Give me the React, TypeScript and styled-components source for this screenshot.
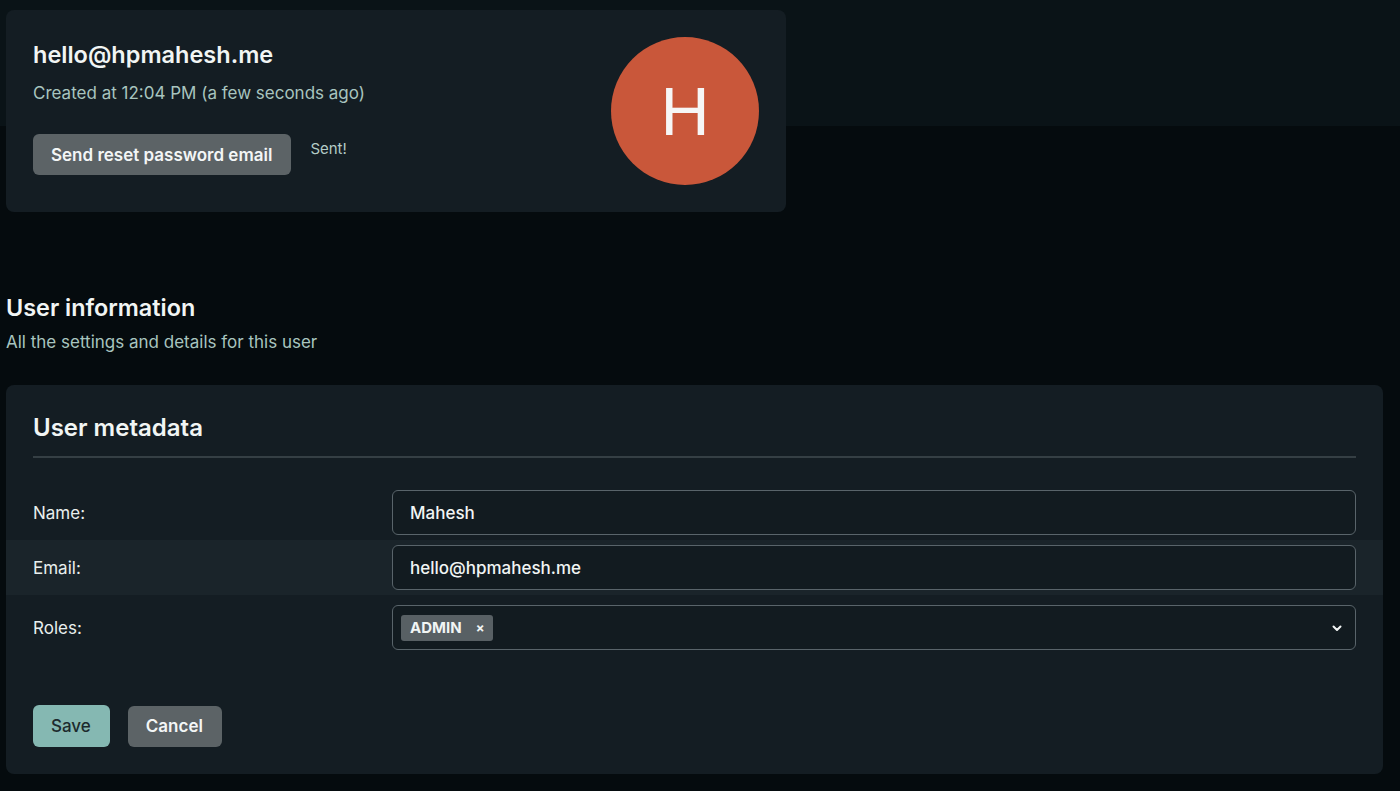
import styled, { createGlobalStyle } from "styled-components";

const GlobalStyle = createGlobalStyle`
  html, body {
    margin: 0;
    padding: 0;
  }
  body {
    background: linear-gradient(#0a1317 0, #0a1317 126px, #050b0e 126px, #050b0e 100%);
    min-height: 100vh;
    font-family: Inter, "Noto Sans", "Liberation Sans", sans-serif;
    color: #eef3f2;
  }
`;

export default function App() {
  return (
    <>
      <GlobalStyle />
      <Page>
        <ProfileCard>
          <ProfileInfo>
            <Email>hello@hpmahesh.me</Email>
            <Created>Created at 12:04 PM (a few seconds ago)</Created>
            <ActionRow>
              <Button $variant="muted">Send reset password email</Button>
              <Sent>Sent!</Sent>
            </ActionRow>
          </ProfileInfo>
          <Avatar>H</Avatar>
        </ProfileCard>

        <Heading>User information</Heading>
        <SubHeading>All the settings and details for this user</SubHeading>

        <FormCard>
          <CardTitle>User metadata</CardTitle>
          <Rows>
            <Row>
              <Label>Name:</Label>
              <Input defaultValue="Mahesh" />
            </Row>
            <Row $striped>
              <Label>Email:</Label>
              <Input defaultValue="hello@hpmahesh.me" />
            </Row>
            <Row $spaced>
              <Label>Roles:</Label>
              <Select>
                <Tag>
                  ADMIN <TagClose>×</TagClose>
                </Tag>
                <svg width="12" height="12" viewBox="0 0 12 12">
                  <path
                    d="M2.5 4.5 L6 8 L9.5 4.5"
                    fill="none"
                    stroke="#f2f5f5"
                    strokeWidth="2"
                    strokeLinecap="round"
                    strokeLinejoin="round"
                  />
                </svg>
              </Select>
            </Row>
          </Rows>
          <Buttons>
            <Button $variant="primary">Save</Button>
            <Button $variant="muted">Cancel</Button>
          </Buttons>
        </FormCard>
      </Page>
    </>
  );
}

const Page = styled.div`
  padding: 10px 17px 20px 6px;
`;

const ProfileCard = styled.div`
  width: 780px;
  box-sizing: border-box;
  background: #141d23;
  border-radius: 8px;
  padding: 27px;
  display: flex;
  align-items: center;
  justify-content: space-between;
`;

const ProfileInfo = styled.div`
  display: flex;
  flex-direction: column;
  margin-top: -6px;
`;

const Email = styled.div`
  font-size: 23.5px;
  font-weight: 600;
  line-height: 28px;
  color: #f1f5f4;
`;

const Created = styled.div`
  margin-top: 12px;
  font-size: 17px;
  line-height: 24px;
  color: #a8c4bf;
`;

const ActionRow = styled.div`
  display: flex;
  align-items: flex-start;
  gap: 19px;
  margin-top: 29px;
`;

const Sent = styled.span`
  font-size: 15px;
  line-height: 20px;
  padding-top: 5px;
  color: #b3cbc6;
`;

const Button = styled.button<{ $variant: "primary" | "muted" }>`
  font-family: Inter, "Noto Sans", "Liberation Sans", sans-serif;
  font-size: 17px;
  font-weight: ${(p) => (p.$variant === "primary" ? 500 : 600)};
  height: ${(p) => (p.$variant === "primary" ? "42px" : "41px")};
  padding: 0 19px 0 18px;
  border: none;
  border-radius: 6px;
  cursor: pointer;
  background: ${(p) => (p.$variant === "primary" ? "#85b8b2" : "#5c6366")};
  color: ${(p) => (p.$variant === "primary" ? "#1c2a2d" : "#f3f6f6")};
`;

const Avatar = styled.div`
  width: 148px;
  height: 148px;
  border-radius: 50%;
  background: #c9573a;
  color: #f6f6f6;
  display: flex;
  align-items: center;
  justify-content: center;
  font-family: "Liberation Sans", Arial, sans-serif;
  font-size: 68px;
  font-weight: 300;
`;

const Heading = styled.h2`
  margin: 81px 0 0 0;
  font-size: 23.4px;
  line-height: 30px;
  font-weight: 600;
  color: #f1f5f4;
`;

const SubHeading = styled.div`
  margin-top: 7px;
  font-size: 17px;
  line-height: 24px;
  color: #a8c4bf;
`;

const FormCard = styled.div`
  margin-top: 31px;
  background: #141d23;
  border-radius: 8px;
  padding: 28px 27px 27px 27px;
`;

const CardTitle = styled.h3`
  margin: 0;
  font-size: 24px;
  line-height: 30px;
  font-weight: 600;
  color: #f1f5f4;
  padding-bottom: 13px;
  border-bottom: 2px solid #353f44;
`;

const Rows = styled.div`
  margin: 27px -27px 0 -27px;
  display: flex;
  flex-direction: column;
`;

const Row = styled.div<{ $striped?: boolean; $spaced?: boolean }>`
  display: grid;
  grid-template-columns: 359px 1fr;
  align-items: center;
  padding: ${(p) => (p.$spaced ? "10px" : "5px")} 27px 5px 27px;
  background: ${(p) => (p.$striped ? "#1a242a" : "transparent")};
`;

const Label = styled.label`
  font-size: 17px;
  color: #e9efee;
`;

const Input = styled.input`
  height: 45px;
  box-sizing: border-box;
  width: 100%;
  background: #121b20;
  border: 1.5px solid #59646a;
  border-radius: 6px;
  padding: 0 17px;
  font-family: Inter, "Noto Sans", "Liberation Sans", sans-serif;
  font-size: 17px;
  font-weight: 500;
  color: #f1f5f4;
  outline: none;
`;

const Select = styled.div`
  height: 45px;
  box-sizing: border-box;
  background: #121b20;
  border: 1.5px solid #59646a;
  border-radius: 6px;
  padding: 0 12px 0 8px;
  display: flex;
  align-items: center;
  justify-content: space-between;
`;

const Tag = styled.span`
  display: inline-flex;
  align-items: center;
  gap: 14px;
  height: 26px;
  padding: 0 9px 0 9px;
  border-radius: 3px;
  background: #586064;
  font-size: 15px;
  font-weight: 700;
  color: #f1f5f4;
`;

const TagClose = styled.span`
  font-size: 13px;
  font-weight: 700;
`;

const Buttons = styled.div`
  display: flex;
  gap: 18px;
  margin-top: 50px;
  align-items: center;
`;
